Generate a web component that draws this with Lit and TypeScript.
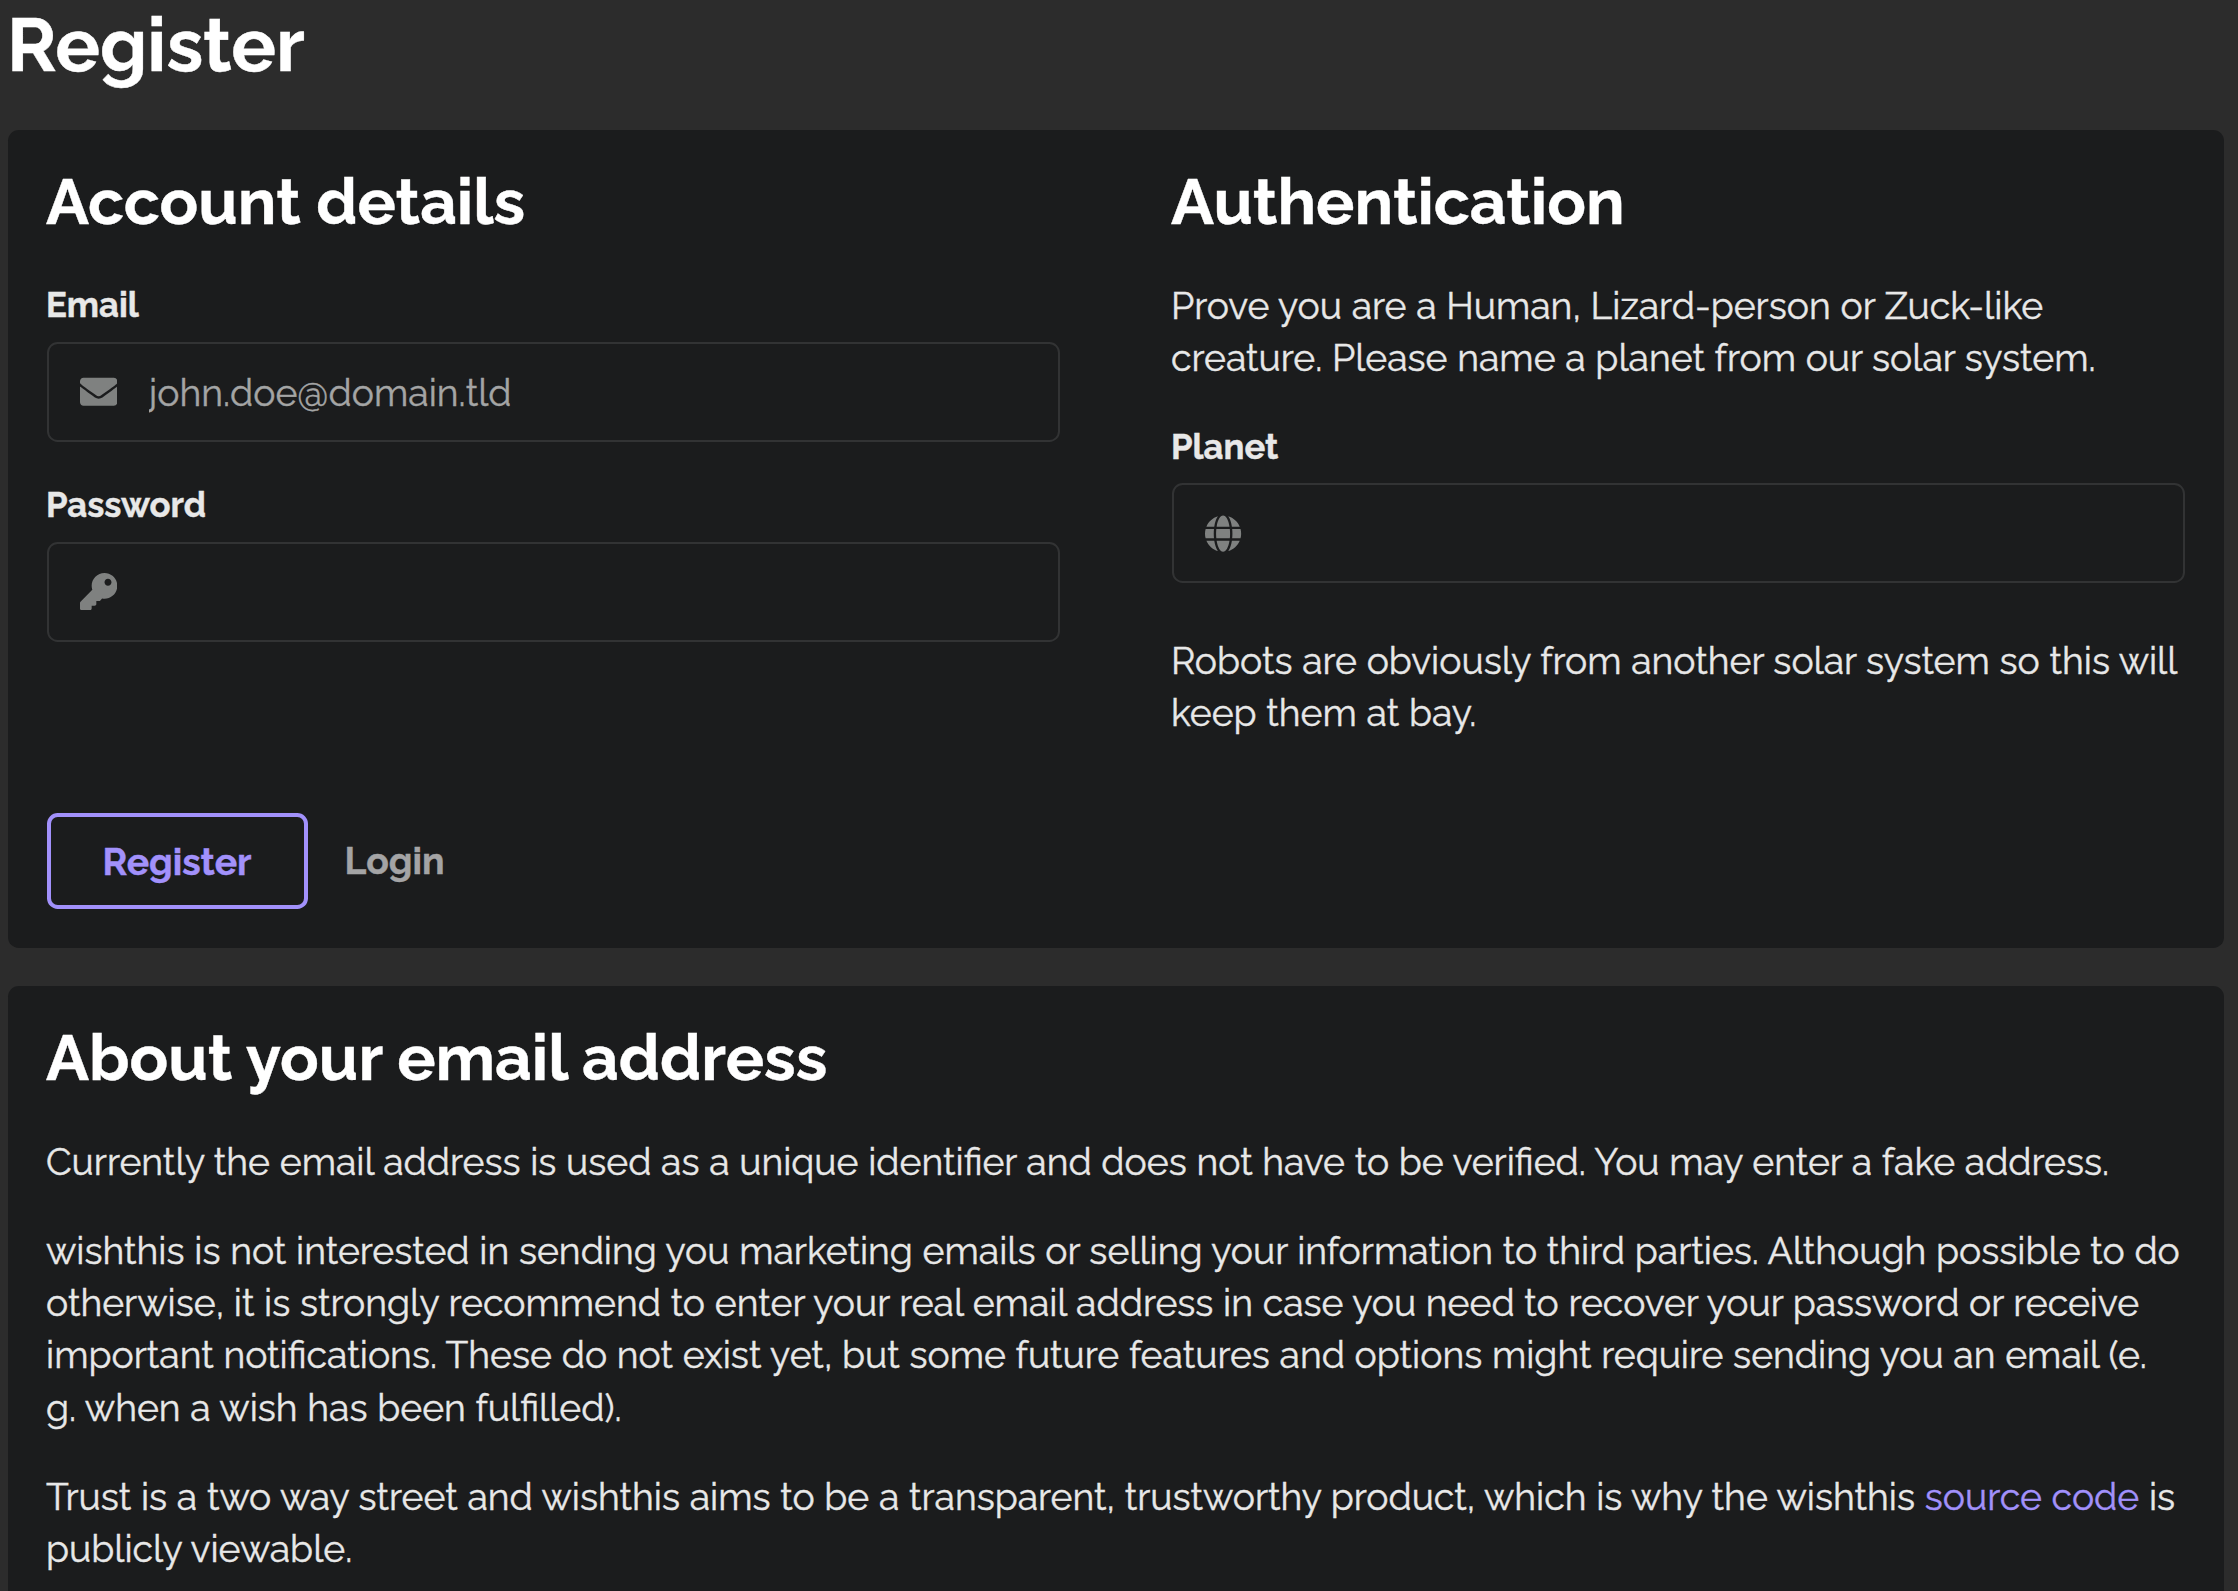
import { LitElement, html, css, svg } from "lit";
import { customElement, property } from "lit/decorators.js";

const ICONS = {
  envelope: {
    box: "0 0 512 512",
    path: "M502.3 190.8c3.9-3.1 9.7-.2 9.7 4.7V400c0 26.5-21.5 48-48 48H48c-26.5 0-48-21.5-48-48V195.6c0-5 5.7-7.8 9.7-4.7 22.4 17.4 52.1 39.5 154.1 113.6 21.1 15.4 56.7 47.8 92.2 47.6 35.7.3 72-32.8 92.3-47.6 102-74.1 131.6-96.3 154-113.7zM256 320c23.2.4 56.6-29.2 73.4-41.4 132.7-96.3 142.8-104.7 173.4-128.7 5.8-4.5 9.2-11.5 9.2-18.9v-19c0-26.5-21.5-48-48-48H48c-26.5 0-48 21.5-48 48v19c0 7.4 3.4 14.3 9.2 18.9 30.6 23.9 40.7 32.4 173.4 128.7 16.8 12.2 50.2 41.8 73.4 41.4z",
  },
  key: {
    box: "0 0 512 512",
    path: "M512 176.001C512 273.203 433.202 352 336 352c-11.22 0-22.19-1.062-32.827-3.069l-24.012 27.014A23.999 23.999 0 0 1 261.223 384H224v40c0 13.255-10.745 24-24 24h-40v40c0 13.255-10.745 24-24 24H24c-13.255 0-24-10.745-24-24v-78.059c0-6.365 2.529-12.47 7.029-16.971l161.802-161.802C163.108 213.814 160 195.271 160 176 160 78.798 238.797.001 335.999 0 433.488-.001 512 78.511 512 176.001zM336 128c0 26.51 21.49 48 48 48s48-21.49 48-48-21.49-48-48-48-48 21.49-48 48z",
  },
  globe: {
    box: "0 0 512 512",
    path: "M336.5 160C322 70.7 287.8 8 248 8s-74 62.7-88.5 152h177zM152 256c0 22.2 1.2 43.5 3.3 64h185.3c2.1-20.5 3.3-41.8 3.3-64s-1.2-43.5-3.3-64H155.3c-2.1 20.5-3.3 41.8-3.3 64zm324.7-96c-28.6-67.9-86.5-120.4-158-141.6 24.4 33.8 41.2 84.7 50 141.6h108zM177.2 18.4C105.8 39.6 47.8 92.1 19.3 160h108c8.7-56.9 25.5-107.8 49.9-141.6zM487.4 192H372.7c2.1 21 3.3 42.5 3.3 64s-1.2 43-3.3 64h114.6c5.5-20.5 8.6-41.8 8.6-64s-3.1-43.5-8.5-64zM120 256c0-21.5 1.2-43 3.3-64H8.6C3.2 212.5 0 233.8 0 256s3.2 43.5 8.6 64h114.6c-2-21-3.2-42.5-3.2-64zm39.5 96c14.5 89.3 48.7 152 88.5 152s74-62.7 88.5-152h-177zm159.3 141.6c71.4-21.2 129.4-73.7 158-141.6h-108c-8.8 56.9-25.6 107.8-50 141.6zM19.3 352c28.6 67.9 86.5 120.4 158 141.6-24.4-33.8-41.2-84.7-50-141.6h-108z",
  },
};

/** Labelled input box with a leading icon. */
@customElement("icon-field")
export class IconField extends LitElement {
  @property() label = "";
  @property() icon: keyof typeof ICONS = "envelope";
  @property() placeholder = "";

  static styles = css`
    :host {
      display: block;
    }
    .label {
      display: block;
      font-size: 34.67px;
      font-weight: 700;
      line-height: 35px;
      margin-bottom: 19.4px;
    }
    .box {
      display: flex;
      align-items: center;
      height: 100px;
      box-sizing: border-box;
      border: 2px solid #323334;
      border-radius: 10.67px;
      margin-left: 1px;
      padding: 0 37px 0 31px;
      gap: 31.5px;
    }
    .icon {
      flex: none;
      display: block;
      width: 37.33px;
      height: 37.33px;
      fill: #7f8180;
    }
    .input {
      flex: 1;
      min-width: 0;
      border: 0;
      padding: 2px 0 0;
      margin: 0;
      outline: 0;
      background: transparent;
      color: #e8e8e8;
      font: inherit;
      line-height: 52px;
      height: 54px;
      -webkit-text-stroke: inherit;
    }
    .input::placeholder {
      color: #a4a5a5;
      opacity: 1;
    }
  `;

  render() {
    const { box, path } = ICONS[this.icon];
    return html`
      <label class="label" for="input">${this.label}</label>
      <div class="box">
        <svg class="icon" viewBox=${box} aria-hidden="true">${svg`<path stroke="none" d=${path} />`}</svg>
        <input id="input" class="input" placeholder=${this.placeholder} />
      </div>
    `;
  }
}

@customElement("app-root")
export class AppRoot extends LitElement {
  static styles = css`
    :host {
      display: block;
      box-sizing: border-box;
      height: 1591px;
      overflow: hidden;
      background: #2c2c2c;
      padding: 7px 14px 0 8px;
      color: #e8e8e8;
      font-family: Raleway, Lato, sans-serif;
      font-size: 37.33px;
      line-height: 52.27px;
      -webkit-text-stroke: 0.4px;
    }
    .title {
      margin: 0 0 48px -1px;
      font-size: 74.67px;
      font-weight: 700;
      line-height: 75px;
      color: #fff;
    }
    .card {
      background: #1b1c1d;
      border-radius: 10.67px;
      padding: 40px 39px 39px 38px;
      margin-bottom: 38px;
    }
    .heading {
      margin: 0 0 45.9px;
      font-size: 64px;
      font-weight: 700;
      line-height: 64px;
      color: #fff;
    }
    .columns {
      display: grid;
      grid-template-columns: 1fr 1fr;
      column-gap: 111px;
    }
    .fields {
      display: flex;
      flex-direction: column;
      gap: 45.6px;
      padding-top: 7.4px;
    }
    .text {
      margin: 0 0 37.1px;
      word-spacing: 0.2px;
    }
    .lead {
      margin-bottom: 36.8px;
    }
    .intro {
      margin-bottom: 44.6px;
    }
    .note {
      margin: 51.5px 0 0;
    }
    .actions {
      display: flex;
      align-items: center;
      gap: 36.5px;
      margin: 73.4px 0 0 1px;
    }
    .primary {
      box-sizing: border-box;
      width: 261px;
      height: 96px;
      padding: 2px 1px 0 0;
      border: 4px solid #a291fb;
      border-radius: 10.67px;
      background: transparent;
      color: #a291fb;
      font: inherit;
      font-weight: 700;
      -webkit-text-stroke: inherit;
    }
    .secondary {
      color: #a4a4a5;
      font-weight: 700;
      text-decoration: none;
    }
    .link {
      color: #a291fb;
      text-decoration: none;
    }
  `;

  render() {
    return html`
      <h1 class="title">Register</h1>
      <section class="card">
        <div class="columns">
          <div>
            <h2 class="heading">Account details</h2>
            <div class="fields">
              <icon-field label="Email" icon="envelope" placeholder="john.doe@domain.tld"></icon-field>
              <icon-field label="Password" icon="key"></icon-field>
            </div>
          </div>
          <div>
            <h2 class="heading">Authentication</h2>
            <p class="text intro">
              Prove you are a Human, Lizard-person or Zuck-like creature. Please name a planet from our solar system.
            </p>
            <icon-field label="Planet" icon="globe"></icon-field>
            <p class="text note">Robots are obviously from another solar system so this will keep them at bay.</p>
          </div>
        </div>
        <div class="actions">
          <button class="primary">Register</button>
          <a class="secondary">Login</a>
        </div>
      </section>
      <section class="card">
        <h2 class="heading">About your email address</h2>
        <p class="text lead">
          Currently the email address is used as a unique identifier and does not have to be verified. You may enter a
          fake address.
        </p>
        <p class="text">
          wishthis is not interested in sending you marketing emails or selling your information to third parties.
          Although possible to do otherwise, it is strongly recommend to enter your real email address in case you need
          to recover your password or receive important notifications. These do not exist yet, but some future features
          and options might require sending you an email (e.<br />g. when a wish has been fulfilled).
        </p>
        <p class="text">
          Trust is a two way street and wishthis aims to be a transparent, trustworthy product, which is why the
          wishthis <a class="link">source code</a> is publicly viewable.
        </p>
      </section>
    `;
  }
}
